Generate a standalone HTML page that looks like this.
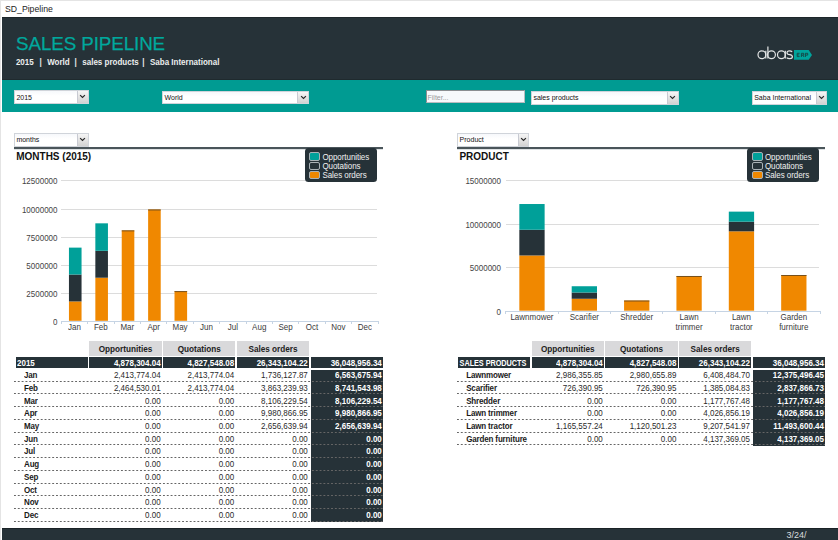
<!DOCTYPE html>
<html><head><meta charset="utf-8"><style>
html,body{margin:0;padding:0;}
body{width:838px;height:540px;overflow:hidden;position:relative;background:#fff;font-family:"Liberation Sans", sans-serif;}
div{font-family:"Liberation Sans", sans-serif;}
</style></head><body>
<div style="position:absolute;left:0.00px;top:0.00px;width:838.00px;height:1.00px;background:#e4e4e4"></div>
<div style="position:absolute;left:0.00px;top:0.00px;width:1.00px;height:540.00px;background:#e4e4e4"></div>
<div style="position:absolute;top:5px;font-size:8.7px;line-height:8.7px;font-weight:400;color:#222;white-space:nowrap;left:5.00px;">SD_Pipeline</div>
<div style="position:absolute;left:2.00px;top:17.00px;width:836.00px;height:63.00px;background:#263238"></div>
<div style="position:absolute;left:2.00px;top:17.00px;width:836.00px;height:1.00px;background:#1d262a"></div>
<div style="position:absolute;top:35px;font-size:18.8px;line-height:18.8px;font-weight:400;color:#00a89d;white-space:nowrap;letter-spacing:-0.1px;-webkit-text-stroke:0.25px #00a89d;left:16.10px;">SALES PIPELINE</div>
<div style="position:absolute;top:59px;font-size:8px;line-height:8px;font-weight:700;color:#eceeee;white-space:nowrap;transform:scaleY(1.15);transform-origin:0 6px;left:15.90px;">2015</div>
<div style="position:absolute;top:59px;font-size:8px;line-height:8px;font-weight:700;color:#eceeee;white-space:nowrap;transform:scaleY(1.15);transform-origin:0 6px;left:47.20px;">World</div>
<div style="position:absolute;top:59px;font-size:8px;line-height:8px;font-weight:700;color:#eceeee;white-space:nowrap;transform:scaleY(1.15);transform-origin:0 6px;left:82.30px;">sales products</div>
<div style="position:absolute;top:59px;font-size:8px;line-height:8px;font-weight:700;color:#eceeee;white-space:nowrap;transform:scaleY(1.15);transform-origin:0 6px;left:150.00px;">Saba International</div>
<div style="position:absolute;top:59px;font-size:8px;line-height:8px;font-weight:700;color:#eceeee;white-space:nowrap;transform:scaleY(1.15);transform-origin:0 6px;left:39.50px;">|</div>
<div style="position:absolute;top:59px;font-size:8px;line-height:8px;font-weight:700;color:#eceeee;white-space:nowrap;transform:scaleY(1.15);transform-origin:0 6px;left:74.60px;">|</div>
<div style="position:absolute;top:59px;font-size:8px;line-height:8px;font-weight:700;color:#eceeee;white-space:nowrap;transform:scaleY(1.15);transform-origin:0 6px;left:142.20px;">|</div>
<svg style="position:absolute;left:755px;top:44px" width="60" height="18" viewBox="0 0 60 18">
<g fill="none" stroke="#e4e6e6" stroke-width="1.2">
<ellipse cx="6.9" cy="10.7" rx="3.9" ry="3.9"/><line x1="10.8" y1="6.8" x2="10.8" y2="14.6"/>
<ellipse cx="16.5" cy="10.7" rx="3.9" ry="3.9"/><line x1="12.9" y1="2.6" x2="12.9" y2="14.6"/>
<ellipse cx="26.4" cy="10.7" rx="3.9" ry="3.9"/><line x1="30.3" y1="6.8" x2="30.3" y2="14.6"/>
<path d="M37.2 7.8 Q36.2 6.8 34.4 6.8 Q32 6.8 32 8.7 Q32 10.3 34.6 10.7 Q37.4 11.1 37.4 12.7 Q37.4 14.6 34.6 14.6 Q32.6 14.6 31.6 13.6"/>
</g>
<path d="M39 6 H53.7 L57 11 L53.7 15.8 H39 Z" fill="#00a39b"/>
<g fill="none" stroke="#17403e" stroke-width="0.85">
<path d="M44.6 9.3 H42.2 V12.6 H44.6 M42.2 10.95 H44.2"/>
<path d="M46.4 13 V9.3 H48.7 V11.1 H46.4 M47.9 11.1 L49 13"/>
<path d="M50.4 13 V9.3 H52.7 V11.1 H50.4"/>
</g>
</svg>
<div style="position:absolute;left:2.00px;top:80.00px;width:836.00px;height:32.00px;background:#009b92"></div>
<div style="position:absolute;left:2.00px;top:79.00px;width:836.00px;height:1.00px;background:#1f2a2e"></div>
<div style="position:absolute;left:14.00px;top:90.30px;width:74.60px;height:13.50px;background:linear-gradient(#f6f8fb,#fff 40%);box-sizing:border-box;border:1px solid #d0d4da;"><div style="position:absolute;right:0;top:0;bottom:0;width:9.5px;background:linear-gradient(#f6f6f6,#d2d2d2);border-left:1px solid #c8cad2"></div></div><svg style="position:absolute;left:79.35px;top:94.15px" width="7" height="5" viewBox="0 0 7 5"><path d="M1.1 1.1 L3.5 3.5 L5.9 1.1" fill="none" stroke="#2a2a2a" stroke-width="1.2"/></svg><div style="position:absolute;top:94px;font-size:7px;line-height:7px;font-weight:400;color:#111;white-space:nowrap;transform:scaleY(1.15);transform-origin:0 6px;left:16.40px;">2015</div>
<div style="position:absolute;left:162.20px;top:91.00px;width:146.60px;height:13.30px;background:linear-gradient(#f6f8fb,#fff 40%);box-sizing:border-box;border:1px solid #d0d4da;"><div style="position:absolute;right:0;top:0;bottom:0;width:9.5px;background:linear-gradient(#f6f6f6,#d2d2d2);border-left:1px solid #c8cad2"></div></div><svg style="position:absolute;left:299.55px;top:94.75px" width="7" height="5" viewBox="0 0 7 5"><path d="M1.1 1.1 L3.5 3.5 L5.9 1.1" fill="none" stroke="#2a2a2a" stroke-width="1.2"/></svg><div style="position:absolute;top:94px;font-size:7px;line-height:7px;font-weight:400;color:#111;white-space:nowrap;transform:scaleY(1.15);transform-origin:0 6px;left:164.60px;">World</div>
<div style="position:absolute;left:426px;top:90.3px;width:99px;height:13px;box-sizing:border-box;background:#f6f9fc;border:1px solid #b8bcc0;border-top-color:#8a8e92;border-left-color:#8a8e92"></div>
<div style="position:absolute;top:94px;font-size:7px;line-height:7px;font-weight:400;color:#999;white-space:nowrap;transform:scaleY(1.15);transform-origin:0 6px;left:427.50px;">Filter...</div>
<div style="position:absolute;left:531.00px;top:91.00px;width:147.50px;height:13.50px;background:linear-gradient(#f6f8fb,#fff 40%);box-sizing:border-box;border:1px solid #d0d4da;"><div style="position:absolute;right:0;top:0;bottom:0;width:9.5px;background:linear-gradient(#f6f6f6,#d2d2d2);border-left:1px solid #c8cad2"></div></div><svg style="position:absolute;left:669.25px;top:94.85px" width="7" height="5" viewBox="0 0 7 5"><path d="M1.1 1.1 L3.5 3.5 L5.9 1.1" fill="none" stroke="#2a2a2a" stroke-width="1.2"/></svg><div style="position:absolute;top:94px;font-size:7px;line-height:7px;font-weight:400;color:#111;white-space:nowrap;transform:scaleY(1.15);transform-origin:0 6px;left:533.40px;">sales products</div>
<div style="position:absolute;left:751.80px;top:91.00px;width:75.40px;height:13.50px;background:linear-gradient(#f6f8fb,#fff 40%);box-sizing:border-box;border:1px solid #d0d4da;"><div style="position:absolute;right:0;top:0;bottom:0;width:9.5px;background:linear-gradient(#f6f6f6,#d2d2d2);border-left:1px solid #c8cad2"></div></div><svg style="position:absolute;left:817.95px;top:94.85px" width="7" height="5" viewBox="0 0 7 5"><path d="M1.1 1.1 L3.5 3.5 L5.9 1.1" fill="none" stroke="#2a2a2a" stroke-width="1.2"/></svg><div style="position:absolute;top:94px;font-size:7px;line-height:7px;font-weight:400;color:#111;white-space:nowrap;transform:scaleY(1.15);transform-origin:0 6px;left:754.20px;">Saba International</div>
<div style="position:absolute;left:14.00px;top:133.10px;width:74.60px;height:13.70px;background:linear-gradient(#f6f8fb,#fff 40%);box-sizing:border-box;border:1px solid #d0d4da;"><div style="position:absolute;right:0;top:0;bottom:0;width:9.5px;background:linear-gradient(#f6f6f6,#d2d2d2);border-left:1px solid #c8cad2"></div></div><svg style="position:absolute;left:79.35px;top:137.05px" width="7" height="5" viewBox="0 0 7 5"><path d="M1.1 1.1 L3.5 3.5 L5.9 1.1" fill="none" stroke="#2a2a2a" stroke-width="1.2"/></svg><div style="position:absolute;top:136px;font-size:7px;line-height:7px;font-weight:400;color:#111;white-space:nowrap;transform:scaleY(1.15);transform-origin:0 6px;left:16.40px;">months</div>
<div style="position:absolute;left:14.00px;top:147.00px;width:369.00px;height:2.00px;background:#4a555a"></div>
<div style="position:absolute;left:14.00px;top:149.00px;width:369.00px;height:0.60px;background:#dde1e3"></div>
<div style="position:absolute;top:152px;font-size:10px;line-height:10px;font-weight:700;color:#111;white-space:nowrap;left:16.20px;">MONTHS (2015)</div>
<div style="position:absolute;left:61.30px;top:180.00px;width:315.70px;height:1.00px;background:#dcdcdc"></div>
<div style="position:absolute;top:178px;font-size:8px;line-height:8px;font-weight:400;color:#444;white-space:nowrap;transform:scaleY(1.15);transform-origin:0 6px;left:-242.50px;width:300px;text-align:right;">12500000</div>
<div style="position:absolute;left:61.30px;top:208.90px;width:315.70px;height:1.00px;background:#dcdcdc"></div>
<div style="position:absolute;top:207px;font-size:8px;line-height:8px;font-weight:400;color:#444;white-space:nowrap;transform:scaleY(1.15);transform-origin:0 6px;left:-242.50px;width:300px;text-align:right;">10000000</div>
<div style="position:absolute;left:61.30px;top:236.90px;width:315.70px;height:1.00px;background:#dcdcdc"></div>
<div style="position:absolute;top:235px;font-size:8px;line-height:8px;font-weight:400;color:#444;white-space:nowrap;transform:scaleY(1.15);transform-origin:0 6px;left:-242.50px;width:300px;text-align:right;">7500000</div>
<div style="position:absolute;left:61.30px;top:264.70px;width:315.70px;height:1.00px;background:#dcdcdc"></div>
<div style="position:absolute;top:263px;font-size:8px;line-height:8px;font-weight:400;color:#444;white-space:nowrap;transform:scaleY(1.15);transform-origin:0 6px;left:-242.50px;width:300px;text-align:right;">5000000</div>
<div style="position:absolute;left:61.30px;top:292.80px;width:315.70px;height:1.00px;background:#dcdcdc"></div>
<div style="position:absolute;top:291px;font-size:8px;line-height:8px;font-weight:400;color:#444;white-space:nowrap;transform:scaleY(1.15);transform-origin:0 6px;left:-242.50px;width:300px;text-align:right;">2500000</div>
<div style="position:absolute;top:319px;font-size:8px;line-height:8px;font-weight:400;color:#444;white-space:nowrap;transform:scaleY(1.15);transform-origin:0 6px;left:-242.50px;width:300px;text-align:right;">0</div>
<div style="position:absolute;left:61.30px;top:320.60px;width:316.70px;height:1.00px;background:#c6d4e4"></div>
<div style="position:absolute;left:60.80px;top:321.10px;width:1.00px;height:2.50px;background:#c6d4e4"></div>
<div style="position:absolute;left:87.19px;top:321.10px;width:1.00px;height:2.50px;background:#c6d4e4"></div>
<div style="position:absolute;left:113.58px;top:321.10px;width:1.00px;height:2.50px;background:#c6d4e4"></div>
<div style="position:absolute;left:139.97px;top:321.10px;width:1.00px;height:2.50px;background:#c6d4e4"></div>
<div style="position:absolute;left:166.37px;top:321.10px;width:1.00px;height:2.50px;background:#c6d4e4"></div>
<div style="position:absolute;left:192.76px;top:321.10px;width:1.00px;height:2.50px;background:#c6d4e4"></div>
<div style="position:absolute;left:219.15px;top:321.10px;width:1.00px;height:2.50px;background:#c6d4e4"></div>
<div style="position:absolute;left:245.54px;top:321.10px;width:1.00px;height:2.50px;background:#c6d4e4"></div>
<div style="position:absolute;left:271.93px;top:321.10px;width:1.00px;height:2.50px;background:#c6d4e4"></div>
<div style="position:absolute;left:298.32px;top:321.10px;width:1.00px;height:2.50px;background:#c6d4e4"></div>
<div style="position:absolute;left:324.72px;top:321.10px;width:1.00px;height:2.50px;background:#c6d4e4"></div>
<div style="position:absolute;left:351.11px;top:321.10px;width:1.00px;height:2.50px;background:#c6d4e4"></div>
<div style="position:absolute;left:377.50px;top:321.10px;width:1.00px;height:2.50px;background:#c6d4e4"></div>
<div style="position:absolute;top:324px;font-size:8px;line-height:8px;font-weight:400;color:#3a3a3a;white-space:nowrap;transform:scaleY(1.15);transform-origin:0 6px;left:-25.50px;width:200px;text-align:center;">Jan</div>
<div style="position:absolute;top:324px;font-size:8px;line-height:8px;font-weight:400;color:#3a3a3a;white-space:nowrap;transform:scaleY(1.15);transform-origin:0 6px;left:0.89px;width:200px;text-align:center;">Feb</div>
<div style="position:absolute;top:324px;font-size:8px;line-height:8px;font-weight:400;color:#3a3a3a;white-space:nowrap;transform:scaleY(1.15);transform-origin:0 6px;left:27.28px;width:200px;text-align:center;">Mar</div>
<div style="position:absolute;top:324px;font-size:8px;line-height:8px;font-weight:400;color:#3a3a3a;white-space:nowrap;transform:scaleY(1.15);transform-origin:0 6px;left:53.67px;width:200px;text-align:center;">Apr</div>
<div style="position:absolute;top:324px;font-size:8px;line-height:8px;font-weight:400;color:#3a3a3a;white-space:nowrap;transform:scaleY(1.15);transform-origin:0 6px;left:80.06px;width:200px;text-align:center;">May</div>
<div style="position:absolute;top:324px;font-size:8px;line-height:8px;font-weight:400;color:#3a3a3a;white-space:nowrap;transform:scaleY(1.15);transform-origin:0 6px;left:106.45px;width:200px;text-align:center;">Jun</div>
<div style="position:absolute;top:324px;font-size:8px;line-height:8px;font-weight:400;color:#3a3a3a;white-space:nowrap;transform:scaleY(1.15);transform-origin:0 6px;left:132.85px;width:200px;text-align:center;">Jul</div>
<div style="position:absolute;top:324px;font-size:8px;line-height:8px;font-weight:400;color:#3a3a3a;white-space:nowrap;transform:scaleY(1.15);transform-origin:0 6px;left:159.24px;width:200px;text-align:center;">Aug</div>
<div style="position:absolute;top:324px;font-size:8px;line-height:8px;font-weight:400;color:#3a3a3a;white-space:nowrap;transform:scaleY(1.15);transform-origin:0 6px;left:185.63px;width:200px;text-align:center;">Sep</div>
<div style="position:absolute;top:324px;font-size:8px;line-height:8px;font-weight:400;color:#3a3a3a;white-space:nowrap;transform:scaleY(1.15);transform-origin:0 6px;left:212.02px;width:200px;text-align:center;">Oct</div>
<div style="position:absolute;top:324px;font-size:8px;line-height:8px;font-weight:400;color:#3a3a3a;white-space:nowrap;transform:scaleY(1.15);transform-origin:0 6px;left:238.41px;width:200px;text-align:center;">Nov</div>
<div style="position:absolute;top:324px;font-size:8px;line-height:8px;font-weight:400;color:#3a3a3a;white-space:nowrap;transform:scaleY(1.15);transform-origin:0 6px;left:264.80px;width:200px;text-align:center;">Dec</div>
<svg style="position:absolute;left:0;top:0" width="838" height="540"><rect x="68.95" y="301.44" width="12.60" height="19.36" fill="#f08800"/><rect x="68.95" y="274.53" width="12.60" height="26.91" fill="#263238"/><rect x="68.95" y="247.62" width="12.60" height="26.91" fill="#00a099"/><rect x="95.34" y="277.72" width="12.60" height="43.08" fill="#f08800"/><rect x="95.34" y="250.81" width="12.60" height="26.91" fill="#263238"/><rect x="95.34" y="223.33" width="12.60" height="27.48" fill="#00a099"/><rect x="121.73" y="230.42" width="12.60" height="90.38" fill="#f08800"/><rect x="121.73" y="230.42" width="12.60" height="0.9" fill="#6a4a1e"/><rect x="148.12" y="209.51" width="12.60" height="111.29" fill="#f08800"/><rect x="148.12" y="209.51" width="12.60" height="0.9" fill="#6a4a1e"/><rect x="174.51" y="291.18" width="12.60" height="29.62" fill="#f08800"/><rect x="174.51" y="291.18" width="12.60" height="0.9" fill="#6a4a1e"/></svg>
<div style="position:absolute;left:304.5px;top:148px;width:72px;height:34px;background:#263238;border-radius:3.5px;"></div>
<div style="position:absolute;left:309.0px;top:152.3px;width:9px;height:6.6px;background:#00a099;border:1px solid #aab2b6;border-radius:2px"></div>
<div style="position:absolute;top:154px;font-size:8px;line-height:8px;font-weight:400;color:#f0f0f0;white-space:nowrap;letter-spacing:-0.06px;transform:scaleY(1.15);transform-origin:0 6px;left:322.40px;">Opportunities</div>
<div style="position:absolute;left:309.0px;top:161.5px;width:9px;height:6.6px;background:#263238;border:1px solid #aab2b6;border-radius:2px"></div>
<div style="position:absolute;top:163px;font-size:8px;line-height:8px;font-weight:400;color:#f0f0f0;white-space:nowrap;letter-spacing:-0.06px;transform:scaleY(1.15);transform-origin:0 6px;left:322.40px;">Quotations</div>
<div style="position:absolute;left:309.0px;top:170.70000000000002px;width:9px;height:6.6px;background:#f08800;border:1px solid #aab2b6;border-radius:2px"></div>
<div style="position:absolute;top:172px;font-size:8px;line-height:8px;font-weight:400;color:#f0f0f0;white-space:nowrap;letter-spacing:-0.06px;transform:scaleY(1.15);transform-origin:0 6px;left:322.40px;">Sales orders</div>
<div style="position:absolute;left:457.20px;top:133.10px;width:72.30px;height:13.70px;background:linear-gradient(#f6f8fb,#fff 40%);box-sizing:border-box;border:1px solid #d0d4da;"><div style="position:absolute;right:0;top:0;bottom:0;width:9.5px;background:linear-gradient(#f6f6f6,#d2d2d2);border-left:1px solid #c8cad2"></div></div><svg style="position:absolute;left:520.25px;top:137.05px" width="7" height="5" viewBox="0 0 7 5"><path d="M1.1 1.1 L3.5 3.5 L5.9 1.1" fill="none" stroke="#2a2a2a" stroke-width="1.2"/></svg><div style="position:absolute;top:136px;font-size:7px;line-height:7px;font-weight:400;color:#111;white-space:nowrap;transform:scaleY(1.15);transform-origin:0 6px;left:459.60px;">Product</div>
<div style="position:absolute;left:457.20px;top:147.00px;width:368.30px;height:2.00px;background:#4a555a"></div>
<div style="position:absolute;left:457.20px;top:149.00px;width:368.30px;height:0.60px;background:#dde1e3"></div>
<div style="position:absolute;top:152px;font-size:10px;line-height:10px;font-weight:700;color:#111;white-space:nowrap;left:459.40px;">PRODUCT</div>
<div style="position:absolute;left:505.80px;top:179.90px;width:313.20px;height:1.00px;background:#dcdcdc"></div>
<div style="position:absolute;top:178px;font-size:8px;line-height:8px;font-weight:400;color:#444;white-space:nowrap;transform:scaleY(1.15);transform-origin:0 6px;left:201.00px;width:300px;text-align:right;">15000000</div>
<div style="position:absolute;left:505.80px;top:224.00px;width:313.20px;height:1.00px;background:#dcdcdc"></div>
<div style="position:absolute;top:222px;font-size:8px;line-height:8px;font-weight:400;color:#444;white-space:nowrap;transform:scaleY(1.15);transform-origin:0 6px;left:201.00px;width:300px;text-align:right;">10000000</div>
<div style="position:absolute;left:505.80px;top:266.90px;width:313.20px;height:1.00px;background:#dcdcdc"></div>
<div style="position:absolute;top:265px;font-size:8px;line-height:8px;font-weight:400;color:#444;white-space:nowrap;transform:scaleY(1.15);transform-origin:0 6px;left:201.00px;width:300px;text-align:right;">5000000</div>
<div style="position:absolute;top:309px;font-size:8px;line-height:8px;font-weight:400;color:#444;white-space:nowrap;transform:scaleY(1.15);transform-origin:0 6px;left:201.00px;width:300px;text-align:right;">0</div>
<div style="position:absolute;left:505.80px;top:310.50px;width:314.20px;height:1.00px;background:#c6d4e4"></div>
<div style="position:absolute;left:505.30px;top:311.00px;width:1.00px;height:2.50px;background:#c6d4e4"></div>
<div style="position:absolute;left:557.67px;top:311.00px;width:1.00px;height:2.50px;background:#c6d4e4"></div>
<div style="position:absolute;left:610.03px;top:311.00px;width:1.00px;height:2.50px;background:#c6d4e4"></div>
<div style="position:absolute;left:662.40px;top:311.00px;width:1.00px;height:2.50px;background:#c6d4e4"></div>
<div style="position:absolute;left:714.77px;top:311.00px;width:1.00px;height:2.50px;background:#c6d4e4"></div>
<div style="position:absolute;left:767.13px;top:311.00px;width:1.00px;height:2.50px;background:#c6d4e4"></div>
<div style="position:absolute;left:819.50px;top:311.00px;width:1.00px;height:2.50px;background:#c6d4e4"></div>
<div style="position:absolute;top:314px;font-size:8px;line-height:8px;font-weight:400;color:#3a3a3a;white-space:nowrap;transform:scaleY(1.15);transform-origin:0 6px;left:431.98px;width:200px;text-align:center;">Lawnmower</div>
<div style="position:absolute;top:314px;font-size:8px;line-height:8px;font-weight:400;color:#3a3a3a;white-space:nowrap;transform:scaleY(1.15);transform-origin:0 6px;left:484.35px;width:200px;text-align:center;">Scarifier</div>
<div style="position:absolute;top:314px;font-size:8px;line-height:8px;font-weight:400;color:#3a3a3a;white-space:nowrap;transform:scaleY(1.15);transform-origin:0 6px;left:536.72px;width:200px;text-align:center;">Shredder</div>
<div style="position:absolute;top:314px;font-size:8px;line-height:8px;font-weight:400;color:#3a3a3a;white-space:nowrap;transform:scaleY(1.15);transform-origin:0 6px;left:589.08px;width:200px;text-align:center;">Lawn</div>
<div style="position:absolute;top:324px;font-size:8px;line-height:8px;font-weight:400;color:#3a3a3a;white-space:nowrap;transform:scaleY(1.15);transform-origin:0 6px;left:589.08px;width:200px;text-align:center;">trimmer</div>
<div style="position:absolute;top:314px;font-size:8px;line-height:8px;font-weight:400;color:#3a3a3a;white-space:nowrap;transform:scaleY(1.15);transform-origin:0 6px;left:641.45px;width:200px;text-align:center;">Lawn</div>
<div style="position:absolute;top:324px;font-size:8px;line-height:8px;font-weight:400;color:#3a3a3a;white-space:nowrap;transform:scaleY(1.15);transform-origin:0 6px;left:641.45px;width:200px;text-align:center;">tractor</div>
<div style="position:absolute;top:314px;font-size:8px;line-height:8px;font-weight:400;color:#3a3a3a;white-space:nowrap;transform:scaleY(1.15);transform-origin:0 6px;left:693.82px;width:200px;text-align:center;">Garden</div>
<div style="position:absolute;top:324px;font-size:8px;line-height:8px;font-weight:400;color:#3a3a3a;white-space:nowrap;transform:scaleY(1.15);transform-origin:0 6px;left:693.82px;width:200px;text-align:center;">furniture</div>
<svg style="position:absolute;left:0;top:0" width="838" height="540"><rect x="519.33" y="255.46" width="25.30" height="55.24" fill="#f08800"/><rect x="519.33" y="229.77" width="25.30" height="25.69" fill="#263238"/><rect x="519.33" y="204.02" width="25.30" height="25.74" fill="#00a099"/><rect x="571.70" y="298.76" width="25.30" height="11.94" fill="#f08800"/><rect x="571.70" y="292.50" width="25.30" height="6.26" fill="#263238"/><rect x="571.70" y="286.24" width="25.30" height="6.26" fill="#00a099"/><rect x="624.07" y="300.55" width="25.30" height="10.15" fill="#f08800"/><rect x="624.07" y="300.55" width="25.30" height="0.9" fill="#6a4a1e"/><rect x="676.43" y="275.99" width="25.30" height="34.71" fill="#f08800"/><rect x="676.43" y="275.99" width="25.30" height="0.9" fill="#6a4a1e"/><rect x="728.80" y="231.33" width="25.30" height="79.37" fill="#f08800"/><rect x="728.80" y="221.67" width="25.30" height="9.66" fill="#263238"/><rect x="728.80" y="211.63" width="25.30" height="10.05" fill="#00a099"/><rect x="781.17" y="275.04" width="25.30" height="35.66" fill="#f08800"/><rect x="781.17" y="275.04" width="25.30" height="0.9" fill="#6a4a1e"/></svg>
<div style="position:absolute;left:747px;top:148px;width:72px;height:34px;background:#263238;border-radius:3.5px;"></div>
<div style="position:absolute;left:751.5px;top:152.3px;width:9px;height:6.6px;background:#00a099;border:1px solid #aab2b6;border-radius:2px"></div>
<div style="position:absolute;top:154px;font-size:8px;line-height:8px;font-weight:400;color:#f0f0f0;white-space:nowrap;letter-spacing:-0.06px;transform:scaleY(1.15);transform-origin:0 6px;left:764.90px;">Opportunities</div>
<div style="position:absolute;left:751.5px;top:161.5px;width:9px;height:6.6px;background:#263238;border:1px solid #aab2b6;border-radius:2px"></div>
<div style="position:absolute;top:163px;font-size:8px;line-height:8px;font-weight:400;color:#f0f0f0;white-space:nowrap;letter-spacing:-0.06px;transform:scaleY(1.15);transform-origin:0 6px;left:764.90px;">Quotations</div>
<div style="position:absolute;left:751.5px;top:170.70000000000002px;width:9px;height:6.6px;background:#f08800;border:1px solid #aab2b6;border-radius:2px"></div>
<div style="position:absolute;top:172px;font-size:8px;line-height:8px;font-weight:400;color:#f0f0f0;white-space:nowrap;letter-spacing:-0.06px;transform:scaleY(1.15);transform-origin:0 6px;left:764.90px;">Sales orders</div>
<div style="position:absolute;left:89.40px;top:341.20px;width:72.40px;height:14.50px;background:#d9d9db"></div>
<div style="position:absolute;top:346px;font-size:8.2px;line-height:8.2px;font-weight:700;color:#222;white-space:nowrap;transform:scaleY(1.15);transform-origin:0 6px;left:25.60px;width:200px;text-align:center;">Opportunities</div>
<div style="position:absolute;left:163.20px;top:341.20px;width:72.20px;height:14.50px;background:#d9d9db"></div>
<div style="position:absolute;top:346px;font-size:8.2px;line-height:8.2px;font-weight:700;color:#222;white-space:nowrap;transform:scaleY(1.15);transform-origin:0 6px;left:99.30px;width:200px;text-align:center;">Quotations</div>
<div style="position:absolute;left:237.00px;top:341.20px;width:72.00px;height:14.50px;background:#d9d9db"></div>
<div style="position:absolute;top:346px;font-size:8.2px;line-height:8.2px;font-weight:700;color:#222;white-space:nowrap;transform:scaleY(1.15);transform-origin:0 6px;left:173.00px;width:200px;text-align:center;">Sales orders</div>
<div style="position:absolute;left:16.00px;top:357.10px;width:72.00px;height:11.30px;background:#263238"></div>
<div style="position:absolute;left:89.40px;top:357.10px;width:72.40px;height:11.30px;background:#263238"></div>
<div style="position:absolute;left:163.20px;top:357.10px;width:72.20px;height:11.30px;background:#263238"></div>
<div style="position:absolute;left:237.00px;top:357.10px;width:72.00px;height:11.30px;background:#263238"></div>
<div style="position:absolute;left:311.00px;top:357.10px;width:72.00px;height:11.30px;background:#263238"></div>
<div style="position:absolute;top:360px;font-size:8px;line-height:8px;font-weight:700;color:#fff;white-space:nowrap;transform:scaleY(1.15);transform-origin:0 6px;left:17.00px;">2015</div>
<div style="position:absolute;top:360px;font-size:8px;line-height:8px;font-weight:700;color:#fff;white-space:nowrap;transform:scaleY(1.15);transform-origin:0 6px;left:-139.40px;width:300px;text-align:right;">4,878,304.04</div>
<div style="position:absolute;top:360px;font-size:8px;line-height:8px;font-weight:700;color:#fff;white-space:nowrap;transform:scaleY(1.15);transform-origin:0 6px;left:-65.80px;width:300px;text-align:right;">4,827,548.08</div>
<div style="position:absolute;top:360px;font-size:8px;line-height:8px;font-weight:700;color:#fff;white-space:nowrap;transform:scaleY(1.15);transform-origin:0 6px;left:7.80px;width:300px;text-align:right;">26,343,104.22</div>
<div style="position:absolute;top:360px;font-size:8px;line-height:8px;font-weight:700;color:#fff;white-space:nowrap;transform:scaleY(1.15);transform-origin:0 6px;left:81.80px;width:300px;text-align:right;">36,048,956.34</div>
<div style="position:absolute;left:311.00px;top:370.00px;width:72.00px;height:152.28px;background:#263238"></div>
<svg style="position:absolute;left:14.40px;top:381px" width="368.60" height="1"><line x1="0" y1="0.5" x2="368.60" y2="0.5" stroke="#666" stroke-width="1" stroke-dasharray="1.91 1.91"/></svg>
<div style="position:absolute;top:372px;font-size:8px;line-height:8px;font-weight:700;color:#1a1a1a;white-space:nowrap;letter-spacing:-0.15px;transform:scaleY(1.15);transform-origin:0 6px;left:24.00px;">Jan</div>
<div style="position:absolute;top:372px;font-size:8px;line-height:8px;font-weight:400;color:#2a2a2a;white-space:nowrap;transform:scaleY(1.15);transform-origin:0 6px;left:-139.40px;width:300px;text-align:right;">2,413,774.04</div>
<div style="position:absolute;top:372px;font-size:8px;line-height:8px;font-weight:400;color:#2a2a2a;white-space:nowrap;transform:scaleY(1.15);transform-origin:0 6px;left:-65.80px;width:300px;text-align:right;">2,413,774.04</div>
<div style="position:absolute;top:372px;font-size:8px;line-height:8px;font-weight:400;color:#2a2a2a;white-space:nowrap;transform:scaleY(1.15);transform-origin:0 6px;left:7.80px;width:300px;text-align:right;">1,736,127.87</div>
<div style="position:absolute;top:372px;font-size:8px;line-height:8px;font-weight:700;color:#fff;white-space:nowrap;transform:scaleY(1.15);transform-origin:0 6px;left:81.80px;width:300px;text-align:right;">6,563,675.94</div>
<svg style="position:absolute;left:14.40px;top:393px" width="368.60" height="1"><line x1="0" y1="0.5" x2="368.60" y2="0.5" stroke="#666" stroke-width="1" stroke-dasharray="1.91 1.91"/></svg>
<div style="position:absolute;top:385px;font-size:8px;line-height:8px;font-weight:700;color:#1a1a1a;white-space:nowrap;letter-spacing:-0.15px;transform:scaleY(1.15);transform-origin:0 6px;left:24.00px;">Feb</div>
<div style="position:absolute;top:385px;font-size:8px;line-height:8px;font-weight:400;color:#2a2a2a;white-space:nowrap;transform:scaleY(1.15);transform-origin:0 6px;left:-139.40px;width:300px;text-align:right;">2,464,530.01</div>
<div style="position:absolute;top:385px;font-size:8px;line-height:8px;font-weight:400;color:#2a2a2a;white-space:nowrap;transform:scaleY(1.15);transform-origin:0 6px;left:-65.80px;width:300px;text-align:right;">2,413,774.04</div>
<div style="position:absolute;top:385px;font-size:8px;line-height:8px;font-weight:400;color:#2a2a2a;white-space:nowrap;transform:scaleY(1.15);transform-origin:0 6px;left:7.80px;width:300px;text-align:right;">3,863,239.93</div>
<div style="position:absolute;top:385px;font-size:8px;line-height:8px;font-weight:700;color:#fff;white-space:nowrap;transform:scaleY(1.15);transform-origin:0 6px;left:81.80px;width:300px;text-align:right;">8,741,543.98</div>
<svg style="position:absolute;left:14.40px;top:406px" width="368.60" height="1"><line x1="0" y1="0.5" x2="368.60" y2="0.5" stroke="#666" stroke-width="1" stroke-dasharray="1.91 1.91"/></svg>
<div style="position:absolute;top:398px;font-size:8px;line-height:8px;font-weight:700;color:#1a1a1a;white-space:nowrap;letter-spacing:-0.15px;transform:scaleY(1.15);transform-origin:0 6px;left:24.00px;">Mar</div>
<div style="position:absolute;top:398px;font-size:8px;line-height:8px;font-weight:400;color:#2a2a2a;white-space:nowrap;transform:scaleY(1.15);transform-origin:0 6px;left:-139.40px;width:300px;text-align:right;">0.00</div>
<div style="position:absolute;top:398px;font-size:8px;line-height:8px;font-weight:400;color:#2a2a2a;white-space:nowrap;transform:scaleY(1.15);transform-origin:0 6px;left:-65.80px;width:300px;text-align:right;">0.00</div>
<div style="position:absolute;top:398px;font-size:8px;line-height:8px;font-weight:400;color:#2a2a2a;white-space:nowrap;transform:scaleY(1.15);transform-origin:0 6px;left:7.80px;width:300px;text-align:right;">8,106,229.54</div>
<div style="position:absolute;top:398px;font-size:8px;line-height:8px;font-weight:700;color:#fff;white-space:nowrap;transform:scaleY(1.15);transform-origin:0 6px;left:81.80px;width:300px;text-align:right;">8,106,229.54</div>
<svg style="position:absolute;left:14.40px;top:419px" width="368.60" height="1"><line x1="0" y1="0.5" x2="368.60" y2="0.5" stroke="#666" stroke-width="1" stroke-dasharray="1.91 1.91"/></svg>
<div style="position:absolute;top:410px;font-size:8px;line-height:8px;font-weight:700;color:#1a1a1a;white-space:nowrap;letter-spacing:-0.15px;transform:scaleY(1.15);transform-origin:0 6px;left:24.00px;">Apr</div>
<div style="position:absolute;top:410px;font-size:8px;line-height:8px;font-weight:400;color:#2a2a2a;white-space:nowrap;transform:scaleY(1.15);transform-origin:0 6px;left:-139.40px;width:300px;text-align:right;">0.00</div>
<div style="position:absolute;top:410px;font-size:8px;line-height:8px;font-weight:400;color:#2a2a2a;white-space:nowrap;transform:scaleY(1.15);transform-origin:0 6px;left:-65.80px;width:300px;text-align:right;">0.00</div>
<div style="position:absolute;top:410px;font-size:8px;line-height:8px;font-weight:400;color:#2a2a2a;white-space:nowrap;transform:scaleY(1.15);transform-origin:0 6px;left:7.80px;width:300px;text-align:right;">9,980,866.95</div>
<div style="position:absolute;top:410px;font-size:8px;line-height:8px;font-weight:700;color:#fff;white-space:nowrap;transform:scaleY(1.15);transform-origin:0 6px;left:81.80px;width:300px;text-align:right;">9,980,866.95</div>
<svg style="position:absolute;left:14.40px;top:432px" width="368.60" height="1"><line x1="0" y1="0.5" x2="368.60" y2="0.5" stroke="#666" stroke-width="1" stroke-dasharray="1.91 1.91"/></svg>
<div style="position:absolute;top:423px;font-size:8px;line-height:8px;font-weight:700;color:#1a1a1a;white-space:nowrap;letter-spacing:-0.15px;transform:scaleY(1.15);transform-origin:0 6px;left:24.00px;">May</div>
<div style="position:absolute;top:423px;font-size:8px;line-height:8px;font-weight:400;color:#2a2a2a;white-space:nowrap;transform:scaleY(1.15);transform-origin:0 6px;left:-139.40px;width:300px;text-align:right;">0.00</div>
<div style="position:absolute;top:423px;font-size:8px;line-height:8px;font-weight:400;color:#2a2a2a;white-space:nowrap;transform:scaleY(1.15);transform-origin:0 6px;left:-65.80px;width:300px;text-align:right;">0.00</div>
<div style="position:absolute;top:423px;font-size:8px;line-height:8px;font-weight:400;color:#2a2a2a;white-space:nowrap;transform:scaleY(1.15);transform-origin:0 6px;left:7.80px;width:300px;text-align:right;">2,656,639.94</div>
<div style="position:absolute;top:423px;font-size:8px;line-height:8px;font-weight:700;color:#fff;white-space:nowrap;transform:scaleY(1.15);transform-origin:0 6px;left:81.80px;width:300px;text-align:right;">2,656,639.94</div>
<svg style="position:absolute;left:14.40px;top:444px" width="368.60" height="1"><line x1="0" y1="0.5" x2="368.60" y2="0.5" stroke="#666" stroke-width="1" stroke-dasharray="1.91 1.91"/></svg>
<div style="position:absolute;top:436px;font-size:8px;line-height:8px;font-weight:700;color:#1a1a1a;white-space:nowrap;letter-spacing:-0.15px;transform:scaleY(1.15);transform-origin:0 6px;left:24.00px;">Jun</div>
<div style="position:absolute;top:436px;font-size:8px;line-height:8px;font-weight:400;color:#2a2a2a;white-space:nowrap;transform:scaleY(1.15);transform-origin:0 6px;left:-139.40px;width:300px;text-align:right;">0.00</div>
<div style="position:absolute;top:436px;font-size:8px;line-height:8px;font-weight:400;color:#2a2a2a;white-space:nowrap;transform:scaleY(1.15);transform-origin:0 6px;left:-65.80px;width:300px;text-align:right;">0.00</div>
<div style="position:absolute;top:436px;font-size:8px;line-height:8px;font-weight:400;color:#2a2a2a;white-space:nowrap;transform:scaleY(1.15);transform-origin:0 6px;left:7.80px;width:300px;text-align:right;">0.00</div>
<div style="position:absolute;top:436px;font-size:8px;line-height:8px;font-weight:700;color:#fff;white-space:nowrap;transform:scaleY(1.15);transform-origin:0 6px;left:81.80px;width:300px;text-align:right;">0.00</div>
<svg style="position:absolute;left:14.40px;top:457px" width="368.60" height="1"><line x1="0" y1="0.5" x2="368.60" y2="0.5" stroke="#666" stroke-width="1" stroke-dasharray="1.91 1.91"/></svg>
<div style="position:absolute;top:448px;font-size:8px;line-height:8px;font-weight:700;color:#1a1a1a;white-space:nowrap;letter-spacing:-0.15px;transform:scaleY(1.15);transform-origin:0 6px;left:24.00px;">Jul</div>
<div style="position:absolute;top:448px;font-size:8px;line-height:8px;font-weight:400;color:#2a2a2a;white-space:nowrap;transform:scaleY(1.15);transform-origin:0 6px;left:-139.40px;width:300px;text-align:right;">0.00</div>
<div style="position:absolute;top:448px;font-size:8px;line-height:8px;font-weight:400;color:#2a2a2a;white-space:nowrap;transform:scaleY(1.15);transform-origin:0 6px;left:-65.80px;width:300px;text-align:right;">0.00</div>
<div style="position:absolute;top:448px;font-size:8px;line-height:8px;font-weight:400;color:#2a2a2a;white-space:nowrap;transform:scaleY(1.15);transform-origin:0 6px;left:7.80px;width:300px;text-align:right;">0.00</div>
<div style="position:absolute;top:448px;font-size:8px;line-height:8px;font-weight:700;color:#fff;white-space:nowrap;transform:scaleY(1.15);transform-origin:0 6px;left:81.80px;width:300px;text-align:right;">0.00</div>
<svg style="position:absolute;left:14.40px;top:470px" width="368.60" height="1"><line x1="0" y1="0.5" x2="368.60" y2="0.5" stroke="#666" stroke-width="1" stroke-dasharray="1.91 1.91"/></svg>
<div style="position:absolute;top:461px;font-size:8px;line-height:8px;font-weight:700;color:#1a1a1a;white-space:nowrap;letter-spacing:-0.15px;transform:scaleY(1.15);transform-origin:0 6px;left:24.00px;">Aug</div>
<div style="position:absolute;top:461px;font-size:8px;line-height:8px;font-weight:400;color:#2a2a2a;white-space:nowrap;transform:scaleY(1.15);transform-origin:0 6px;left:-139.40px;width:300px;text-align:right;">0.00</div>
<div style="position:absolute;top:461px;font-size:8px;line-height:8px;font-weight:400;color:#2a2a2a;white-space:nowrap;transform:scaleY(1.15);transform-origin:0 6px;left:-65.80px;width:300px;text-align:right;">0.00</div>
<div style="position:absolute;top:461px;font-size:8px;line-height:8px;font-weight:400;color:#2a2a2a;white-space:nowrap;transform:scaleY(1.15);transform-origin:0 6px;left:7.80px;width:300px;text-align:right;">0.00</div>
<div style="position:absolute;top:461px;font-size:8px;line-height:8px;font-weight:700;color:#fff;white-space:nowrap;transform:scaleY(1.15);transform-origin:0 6px;left:81.80px;width:300px;text-align:right;">0.00</div>
<svg style="position:absolute;left:14.40px;top:483px" width="368.60" height="1"><line x1="0" y1="0.5" x2="368.60" y2="0.5" stroke="#666" stroke-width="1" stroke-dasharray="1.91 1.91"/></svg>
<div style="position:absolute;top:474px;font-size:8px;line-height:8px;font-weight:700;color:#1a1a1a;white-space:nowrap;letter-spacing:-0.15px;transform:scaleY(1.15);transform-origin:0 6px;left:24.00px;">Sep</div>
<div style="position:absolute;top:474px;font-size:8px;line-height:8px;font-weight:400;color:#2a2a2a;white-space:nowrap;transform:scaleY(1.15);transform-origin:0 6px;left:-139.40px;width:300px;text-align:right;">0.00</div>
<div style="position:absolute;top:474px;font-size:8px;line-height:8px;font-weight:400;color:#2a2a2a;white-space:nowrap;transform:scaleY(1.15);transform-origin:0 6px;left:-65.80px;width:300px;text-align:right;">0.00</div>
<div style="position:absolute;top:474px;font-size:8px;line-height:8px;font-weight:400;color:#2a2a2a;white-space:nowrap;transform:scaleY(1.15);transform-origin:0 6px;left:7.80px;width:300px;text-align:right;">0.00</div>
<div style="position:absolute;top:474px;font-size:8px;line-height:8px;font-weight:700;color:#fff;white-space:nowrap;transform:scaleY(1.15);transform-origin:0 6px;left:81.80px;width:300px;text-align:right;">0.00</div>
<svg style="position:absolute;left:14.40px;top:495px" width="368.60" height="1"><line x1="0" y1="0.5" x2="368.60" y2="0.5" stroke="#666" stroke-width="1" stroke-dasharray="1.91 1.91"/></svg>
<div style="position:absolute;top:487px;font-size:8px;line-height:8px;font-weight:700;color:#1a1a1a;white-space:nowrap;letter-spacing:-0.15px;transform:scaleY(1.15);transform-origin:0 6px;left:24.00px;">Oct</div>
<div style="position:absolute;top:487px;font-size:8px;line-height:8px;font-weight:400;color:#2a2a2a;white-space:nowrap;transform:scaleY(1.15);transform-origin:0 6px;left:-139.40px;width:300px;text-align:right;">0.00</div>
<div style="position:absolute;top:487px;font-size:8px;line-height:8px;font-weight:400;color:#2a2a2a;white-space:nowrap;transform:scaleY(1.15);transform-origin:0 6px;left:-65.80px;width:300px;text-align:right;">0.00</div>
<div style="position:absolute;top:487px;font-size:8px;line-height:8px;font-weight:400;color:#2a2a2a;white-space:nowrap;transform:scaleY(1.15);transform-origin:0 6px;left:7.80px;width:300px;text-align:right;">0.00</div>
<div style="position:absolute;top:487px;font-size:8px;line-height:8px;font-weight:700;color:#fff;white-space:nowrap;transform:scaleY(1.15);transform-origin:0 6px;left:81.80px;width:300px;text-align:right;">0.00</div>
<svg style="position:absolute;left:14.40px;top:508px" width="368.60" height="1"><line x1="0" y1="0.5" x2="368.60" y2="0.5" stroke="#666" stroke-width="1" stroke-dasharray="1.91 1.91"/></svg>
<div style="position:absolute;top:499px;font-size:8px;line-height:8px;font-weight:700;color:#1a1a1a;white-space:nowrap;letter-spacing:-0.15px;transform:scaleY(1.15);transform-origin:0 6px;left:24.00px;">Nov</div>
<div style="position:absolute;top:499px;font-size:8px;line-height:8px;font-weight:400;color:#2a2a2a;white-space:nowrap;transform:scaleY(1.15);transform-origin:0 6px;left:-139.40px;width:300px;text-align:right;">0.00</div>
<div style="position:absolute;top:499px;font-size:8px;line-height:8px;font-weight:400;color:#2a2a2a;white-space:nowrap;transform:scaleY(1.15);transform-origin:0 6px;left:-65.80px;width:300px;text-align:right;">0.00</div>
<div style="position:absolute;top:499px;font-size:8px;line-height:8px;font-weight:400;color:#2a2a2a;white-space:nowrap;transform:scaleY(1.15);transform-origin:0 6px;left:7.80px;width:300px;text-align:right;">0.00</div>
<div style="position:absolute;top:499px;font-size:8px;line-height:8px;font-weight:700;color:#fff;white-space:nowrap;transform:scaleY(1.15);transform-origin:0 6px;left:81.80px;width:300px;text-align:right;">0.00</div>
<svg style="position:absolute;left:14.40px;top:521px" width="368.60" height="1"><line x1="0" y1="0.5" x2="368.60" y2="0.5" stroke="#666" stroke-width="1" stroke-dasharray="1.91 1.91"/></svg>
<div style="position:absolute;top:512px;font-size:8px;line-height:8px;font-weight:700;color:#1a1a1a;white-space:nowrap;letter-spacing:-0.15px;transform:scaleY(1.15);transform-origin:0 6px;left:24.00px;">Dec</div>
<div style="position:absolute;top:512px;font-size:8px;line-height:8px;font-weight:400;color:#2a2a2a;white-space:nowrap;transform:scaleY(1.15);transform-origin:0 6px;left:-139.40px;width:300px;text-align:right;">0.00</div>
<div style="position:absolute;top:512px;font-size:8px;line-height:8px;font-weight:400;color:#2a2a2a;white-space:nowrap;transform:scaleY(1.15);transform-origin:0 6px;left:-65.80px;width:300px;text-align:right;">0.00</div>
<div style="position:absolute;top:512px;font-size:8px;line-height:8px;font-weight:400;color:#2a2a2a;white-space:nowrap;transform:scaleY(1.15);transform-origin:0 6px;left:7.80px;width:300px;text-align:right;">0.00</div>
<div style="position:absolute;top:512px;font-size:8px;line-height:8px;font-weight:700;color:#fff;white-space:nowrap;transform:scaleY(1.15);transform-origin:0 6px;left:81.80px;width:300px;text-align:right;">0.00</div>
<div style="position:absolute;left:531.60px;top:341.20px;width:72.40px;height:14.50px;background:#d9d9db"></div>
<div style="position:absolute;top:346px;font-size:8.2px;line-height:8.2px;font-weight:700;color:#222;white-space:nowrap;transform:scaleY(1.15);transform-origin:0 6px;left:467.80px;width:200px;text-align:center;">Opportunities</div>
<div style="position:absolute;left:605.40px;top:341.20px;width:72.20px;height:14.50px;background:#d9d9db"></div>
<div style="position:absolute;top:346px;font-size:8.2px;line-height:8.2px;font-weight:700;color:#222;white-space:nowrap;transform:scaleY(1.15);transform-origin:0 6px;left:541.50px;width:200px;text-align:center;">Quotations</div>
<div style="position:absolute;left:679.20px;top:341.20px;width:72.00px;height:14.50px;background:#d9d9db"></div>
<div style="position:absolute;top:346px;font-size:8.2px;line-height:8.2px;font-weight:700;color:#222;white-space:nowrap;transform:scaleY(1.15);transform-origin:0 6px;left:615.20px;width:200px;text-align:center;">Sales orders</div>
<div style="position:absolute;left:458.20px;top:357.10px;width:72.00px;height:11.30px;background:#263238"></div>
<div style="position:absolute;left:531.60px;top:357.10px;width:72.40px;height:11.30px;background:#263238"></div>
<div style="position:absolute;left:605.40px;top:357.10px;width:72.20px;height:11.30px;background:#263238"></div>
<div style="position:absolute;left:679.20px;top:357.10px;width:72.00px;height:11.30px;background:#263238"></div>
<div style="position:absolute;left:753.20px;top:357.10px;width:72.00px;height:11.30px;background:#263238"></div>
<div style="position:absolute;top:360px;font-size:7.3px;line-height:7.3px;font-weight:700;color:#fff;white-space:nowrap;letter-spacing:-0.05px;transform:scaleY(1.15);transform-origin:0 6px;left:459.60px;">SALES PRODUCTS</div>
<div style="position:absolute;top:360px;font-size:8px;line-height:8px;font-weight:700;color:#fff;white-space:nowrap;transform:scaleY(1.15);transform-origin:0 6px;left:302.80px;width:300px;text-align:right;">4,878,304.04</div>
<div style="position:absolute;top:360px;font-size:8px;line-height:8px;font-weight:700;color:#fff;white-space:nowrap;transform:scaleY(1.15);transform-origin:0 6px;left:376.40px;width:300px;text-align:right;">4,827,548.08</div>
<div style="position:absolute;top:360px;font-size:8px;line-height:8px;font-weight:700;color:#fff;white-space:nowrap;transform:scaleY(1.15);transform-origin:0 6px;left:450.00px;width:300px;text-align:right;">26,343,104.22</div>
<div style="position:absolute;top:360px;font-size:8px;line-height:8px;font-weight:700;color:#fff;white-space:nowrap;transform:scaleY(1.15);transform-origin:0 6px;left:524.00px;width:300px;text-align:right;">36,048,956.34</div>
<div style="position:absolute;left:753.20px;top:370.00px;width:72.00px;height:75.84px;background:#263238"></div>
<svg style="position:absolute;left:456.60px;top:381px" width="368.60" height="1"><line x1="0" y1="0.5" x2="368.60" y2="0.5" stroke="#666" stroke-width="1" stroke-dasharray="1.91 1.91"/></svg>
<div style="position:absolute;top:372px;font-size:8px;line-height:8px;font-weight:700;color:#1a1a1a;white-space:nowrap;letter-spacing:-0.15px;transform:scaleY(1.15);transform-origin:0 6px;left:466.20px;">Lawnmower</div>
<div style="position:absolute;top:372px;font-size:8px;line-height:8px;font-weight:400;color:#2a2a2a;white-space:nowrap;transform:scaleY(1.15);transform-origin:0 6px;left:302.80px;width:300px;text-align:right;">2,986,355.85</div>
<div style="position:absolute;top:372px;font-size:8px;line-height:8px;font-weight:400;color:#2a2a2a;white-space:nowrap;transform:scaleY(1.15);transform-origin:0 6px;left:376.40px;width:300px;text-align:right;">2,980,655.89</div>
<div style="position:absolute;top:372px;font-size:8px;line-height:8px;font-weight:400;color:#2a2a2a;white-space:nowrap;transform:scaleY(1.15);transform-origin:0 6px;left:450.00px;width:300px;text-align:right;">6,408,484.70</div>
<div style="position:absolute;top:372px;font-size:8px;line-height:8px;font-weight:700;color:#fff;white-space:nowrap;transform:scaleY(1.15);transform-origin:0 6px;left:524.00px;width:300px;text-align:right;">12,375,496.45</div>
<svg style="position:absolute;left:456.60px;top:393px" width="368.60" height="1"><line x1="0" y1="0.5" x2="368.60" y2="0.5" stroke="#666" stroke-width="1" stroke-dasharray="1.91 1.91"/></svg>
<div style="position:absolute;top:385px;font-size:8px;line-height:8px;font-weight:700;color:#1a1a1a;white-space:nowrap;letter-spacing:-0.15px;transform:scaleY(1.15);transform-origin:0 6px;left:466.20px;">Scarifier</div>
<div style="position:absolute;top:385px;font-size:8px;line-height:8px;font-weight:400;color:#2a2a2a;white-space:nowrap;transform:scaleY(1.15);transform-origin:0 6px;left:302.80px;width:300px;text-align:right;">726,390.95</div>
<div style="position:absolute;top:385px;font-size:8px;line-height:8px;font-weight:400;color:#2a2a2a;white-space:nowrap;transform:scaleY(1.15);transform-origin:0 6px;left:376.40px;width:300px;text-align:right;">726,390.95</div>
<div style="position:absolute;top:385px;font-size:8px;line-height:8px;font-weight:400;color:#2a2a2a;white-space:nowrap;transform:scaleY(1.15);transform-origin:0 6px;left:450.00px;width:300px;text-align:right;">1,385,084.83</div>
<div style="position:absolute;top:385px;font-size:8px;line-height:8px;font-weight:700;color:#fff;white-space:nowrap;transform:scaleY(1.15);transform-origin:0 6px;left:524.00px;width:300px;text-align:right;">2,837,866.73</div>
<svg style="position:absolute;left:456.60px;top:406px" width="368.60" height="1"><line x1="0" y1="0.5" x2="368.60" y2="0.5" stroke="#666" stroke-width="1" stroke-dasharray="1.91 1.91"/></svg>
<div style="position:absolute;top:398px;font-size:8px;line-height:8px;font-weight:700;color:#1a1a1a;white-space:nowrap;letter-spacing:-0.15px;transform:scaleY(1.15);transform-origin:0 6px;left:466.20px;">Shredder</div>
<div style="position:absolute;top:398px;font-size:8px;line-height:8px;font-weight:400;color:#2a2a2a;white-space:nowrap;transform:scaleY(1.15);transform-origin:0 6px;left:302.80px;width:300px;text-align:right;">0.00</div>
<div style="position:absolute;top:398px;font-size:8px;line-height:8px;font-weight:400;color:#2a2a2a;white-space:nowrap;transform:scaleY(1.15);transform-origin:0 6px;left:376.40px;width:300px;text-align:right;">0.00</div>
<div style="position:absolute;top:398px;font-size:8px;line-height:8px;font-weight:400;color:#2a2a2a;white-space:nowrap;transform:scaleY(1.15);transform-origin:0 6px;left:450.00px;width:300px;text-align:right;">1,177,767.48</div>
<div style="position:absolute;top:398px;font-size:8px;line-height:8px;font-weight:700;color:#fff;white-space:nowrap;transform:scaleY(1.15);transform-origin:0 6px;left:524.00px;width:300px;text-align:right;">1,177,767.48</div>
<svg style="position:absolute;left:456.60px;top:419px" width="368.60" height="1"><line x1="0" y1="0.5" x2="368.60" y2="0.5" stroke="#666" stroke-width="1" stroke-dasharray="1.91 1.91"/></svg>
<div style="position:absolute;top:410px;font-size:8px;line-height:8px;font-weight:700;color:#1a1a1a;white-space:nowrap;letter-spacing:-0.15px;transform:scaleY(1.15);transform-origin:0 6px;left:466.20px;">Lawn trimmer</div>
<div style="position:absolute;top:410px;font-size:8px;line-height:8px;font-weight:400;color:#2a2a2a;white-space:nowrap;transform:scaleY(1.15);transform-origin:0 6px;left:302.80px;width:300px;text-align:right;">0.00</div>
<div style="position:absolute;top:410px;font-size:8px;line-height:8px;font-weight:400;color:#2a2a2a;white-space:nowrap;transform:scaleY(1.15);transform-origin:0 6px;left:376.40px;width:300px;text-align:right;">0.00</div>
<div style="position:absolute;top:410px;font-size:8px;line-height:8px;font-weight:400;color:#2a2a2a;white-space:nowrap;transform:scaleY(1.15);transform-origin:0 6px;left:450.00px;width:300px;text-align:right;">4,026,856.19</div>
<div style="position:absolute;top:410px;font-size:8px;line-height:8px;font-weight:700;color:#fff;white-space:nowrap;transform:scaleY(1.15);transform-origin:0 6px;left:524.00px;width:300px;text-align:right;">4,026,856.19</div>
<svg style="position:absolute;left:456.60px;top:432px" width="368.60" height="1"><line x1="0" y1="0.5" x2="368.60" y2="0.5" stroke="#666" stroke-width="1" stroke-dasharray="1.91 1.91"/></svg>
<div style="position:absolute;top:423px;font-size:8px;line-height:8px;font-weight:700;color:#1a1a1a;white-space:nowrap;letter-spacing:-0.15px;transform:scaleY(1.15);transform-origin:0 6px;left:466.20px;">Lawn tractor</div>
<div style="position:absolute;top:423px;font-size:8px;line-height:8px;font-weight:400;color:#2a2a2a;white-space:nowrap;transform:scaleY(1.15);transform-origin:0 6px;left:302.80px;width:300px;text-align:right;">1,165,557.24</div>
<div style="position:absolute;top:423px;font-size:8px;line-height:8px;font-weight:400;color:#2a2a2a;white-space:nowrap;transform:scaleY(1.15);transform-origin:0 6px;left:376.40px;width:300px;text-align:right;">1,120,501.23</div>
<div style="position:absolute;top:423px;font-size:8px;line-height:8px;font-weight:400;color:#2a2a2a;white-space:nowrap;transform:scaleY(1.15);transform-origin:0 6px;left:450.00px;width:300px;text-align:right;">9,207,541.97</div>
<div style="position:absolute;top:423px;font-size:8px;line-height:8px;font-weight:700;color:#fff;white-space:nowrap;transform:scaleY(1.15);transform-origin:0 6px;left:524.00px;width:300px;text-align:right;">11,493,600.44</div>
<svg style="position:absolute;left:456.60px;top:444px" width="368.60" height="1"><line x1="0" y1="0.5" x2="368.60" y2="0.5" stroke="#666" stroke-width="1" stroke-dasharray="1.91 1.91"/></svg>
<div style="position:absolute;top:436px;font-size:8px;line-height:8px;font-weight:700;color:#1a1a1a;white-space:nowrap;letter-spacing:-0.15px;transform:scaleY(1.15);transform-origin:0 6px;left:466.20px;">Garden furniture</div>
<div style="position:absolute;top:436px;font-size:8px;line-height:8px;font-weight:400;color:#2a2a2a;white-space:nowrap;transform:scaleY(1.15);transform-origin:0 6px;left:302.80px;width:300px;text-align:right;">0.00</div>
<div style="position:absolute;top:436px;font-size:8px;line-height:8px;font-weight:400;color:#2a2a2a;white-space:nowrap;transform:scaleY(1.15);transform-origin:0 6px;left:376.40px;width:300px;text-align:right;">0.00</div>
<div style="position:absolute;top:436px;font-size:8px;line-height:8px;font-weight:400;color:#2a2a2a;white-space:nowrap;transform:scaleY(1.15);transform-origin:0 6px;left:450.00px;width:300px;text-align:right;">4,137,369.05</div>
<div style="position:absolute;top:436px;font-size:8px;line-height:8px;font-weight:700;color:#fff;white-space:nowrap;transform:scaleY(1.15);transform-origin:0 6px;left:524.00px;width:300px;text-align:right;">4,137,369.05</div>
<div style="position:absolute;left:2.00px;top:527.50px;width:836.00px;height:12.50px;background:#263238"></div>
<div style="position:absolute;left:2.00px;top:527.50px;width:836.00px;height:1.00px;background:#1a2226"></div>
<div style="position:absolute;top:531px;font-size:9px;line-height:9px;font-weight:400;color:#d8dcdc;white-space:nowrap;left:786.50px;">3/24/</div>
</body></html>
